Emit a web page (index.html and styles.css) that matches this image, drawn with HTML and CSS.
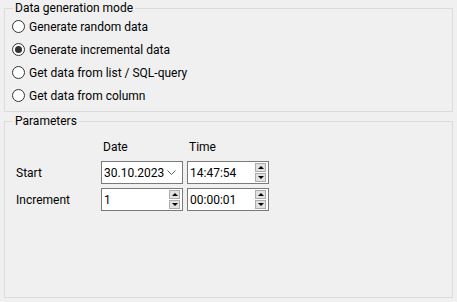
FILE: index.html
```html
<!DOCTYPE html>
<html lang="en">
<head>
    <meta charset="UTF-8">
    <meta name="viewport" content="width=device-width, initial-scale=1.0">
    <title>Data generation</title>
    <link rel="stylesheet" href="styles.css">
</head>
<body>
<fieldset class="group mode">
    <legend>Data generation mode</legend>
    <div class="options">
        <label class="option"><input type="radio" name="mode"> Generate random data</label>
        <label class="option"><input type="radio" name="mode" checked> Generate incremental data</label>
        <label class="option"><input type="radio" name="mode"> Get data from list / SQL-query</label>
        <label class="option"><input type="radio" name="mode"> Get data from column</label>
    </div>
</fieldset>

<fieldset class="group params">
    <legend>Parameters</legend>
    <div class="param-grid">
        <span></span>
        <span class="col-head">Date</span>
        <span class="col-head">Time</span>

        <span class="row-label">Start</span>
        <div class="field">
            <span class="value">30.10.2023</span>
            <svg class="chevron" width="9" height="6" viewBox="0 0 9 6"><path d="M0.5 0.5 L4.5 4.5 L8.5 0.5" fill="none" stroke="#606060" stroke-width="1"/></svg>
        </div>
        <div class="field">
            <span class="value">14:47:54</span>
            <div class="spinner">
                <button class="spin-btn"><span class="arrow-up"></span></button>
                <button class="spin-btn"><span class="arrow-down"></span></button>
            </div>
        </div>

        <span class="row-label">Increment</span>
        <div class="field">
            <span class="value">1</span>
            <div class="spinner">
                <button class="spin-btn"><span class="arrow-up"></span></button>
                <button class="spin-btn"><span class="arrow-down"></span></button>
            </div>
        </div>
        <div class="field">
            <span class="value">00:00:01</span>
            <div class="spinner">
                <button class="spin-btn"><span class="arrow-up"></span></button>
                <button class="spin-btn"><span class="arrow-down"></span></button>
            </div>
        </div>
    </div>
</fieldset>
</body>
</html>
```

FILE: styles.css
```css
body {
    margin: 0;
    background: #f0f0f0;
    font-family: Roboto, "Noto Sans", sans-serif;
    font-size: 12px;
    color: #000;
}

.group {
    margin: 0 4px;
    padding: 0;
    border: 1px solid #dcdcdc;
}

.group legend {
    margin-left: 8px;
    padding: 0 2px;
    line-height: 16px;
}

.mode {
    height: 112px;
    box-sizing: border-box;
}

.options {
    display: flex;
    flex-direction: column;
    padding-left: 7px;
    margin-top: -1px;
}

.option {
    display: flex;
    align-items: center;
    gap: 4px;
    height: 23px;
}

.option input {
    appearance: none;
    margin: 0;
    width: 13px;
    height: 13px;
    border: 1px solid #333;
    border-radius: 50%;
    background: #fff;
    display: grid;
    place-content: center;
}

.option input:checked::before {
    content: "";
    width: 7px;
    height: 7px;
    border-radius: 50%;
    background: #333;
}

.params {
    margin-top: 1px;
    height: 185px;
    box-sizing: border-box;
}

.param-grid {
    display: grid;
    grid-template-columns: 81px 82px 82px;
    grid-template-rows: 18px 23px 23px;
    column-gap: 4px;
    row-gap: 4px;
    padding: 10px 0 0 11px;
}

.col-head {
    line-height: 16px;
    margin-left: 2px;
}

.row-label {
    display: flex;
    align-items: center;
}

.field {
    display: flex;
    align-items: center;
    border: 1px solid #7a7a7a;
    background: #fff;
    box-sizing: border-box;
    height: 23px;
    padding-left: 2px;
}

.value {
    flex: 1;
}

.chevron {
    margin-right: 6px;
}

.spinner {
    display: flex;
    flex-direction: column;
    gap: 1px;
    margin-right: 2px;
}

.spin-btn {
    width: 11px;
    height: 9px;
    padding: 0;
    border: 1px solid #adadad;
    background: #e1e1e1;
    display: grid;
    place-content: center;
}

.arrow-up, .arrow-down {
    width: 0;
    height: 0;
    border-left: 3px solid transparent;
    border-right: 3px solid transparent;
}

.arrow-up {
    border-bottom: 3px solid #000;
}

.arrow-down {
    border-top: 3px solid #000;
}
```
